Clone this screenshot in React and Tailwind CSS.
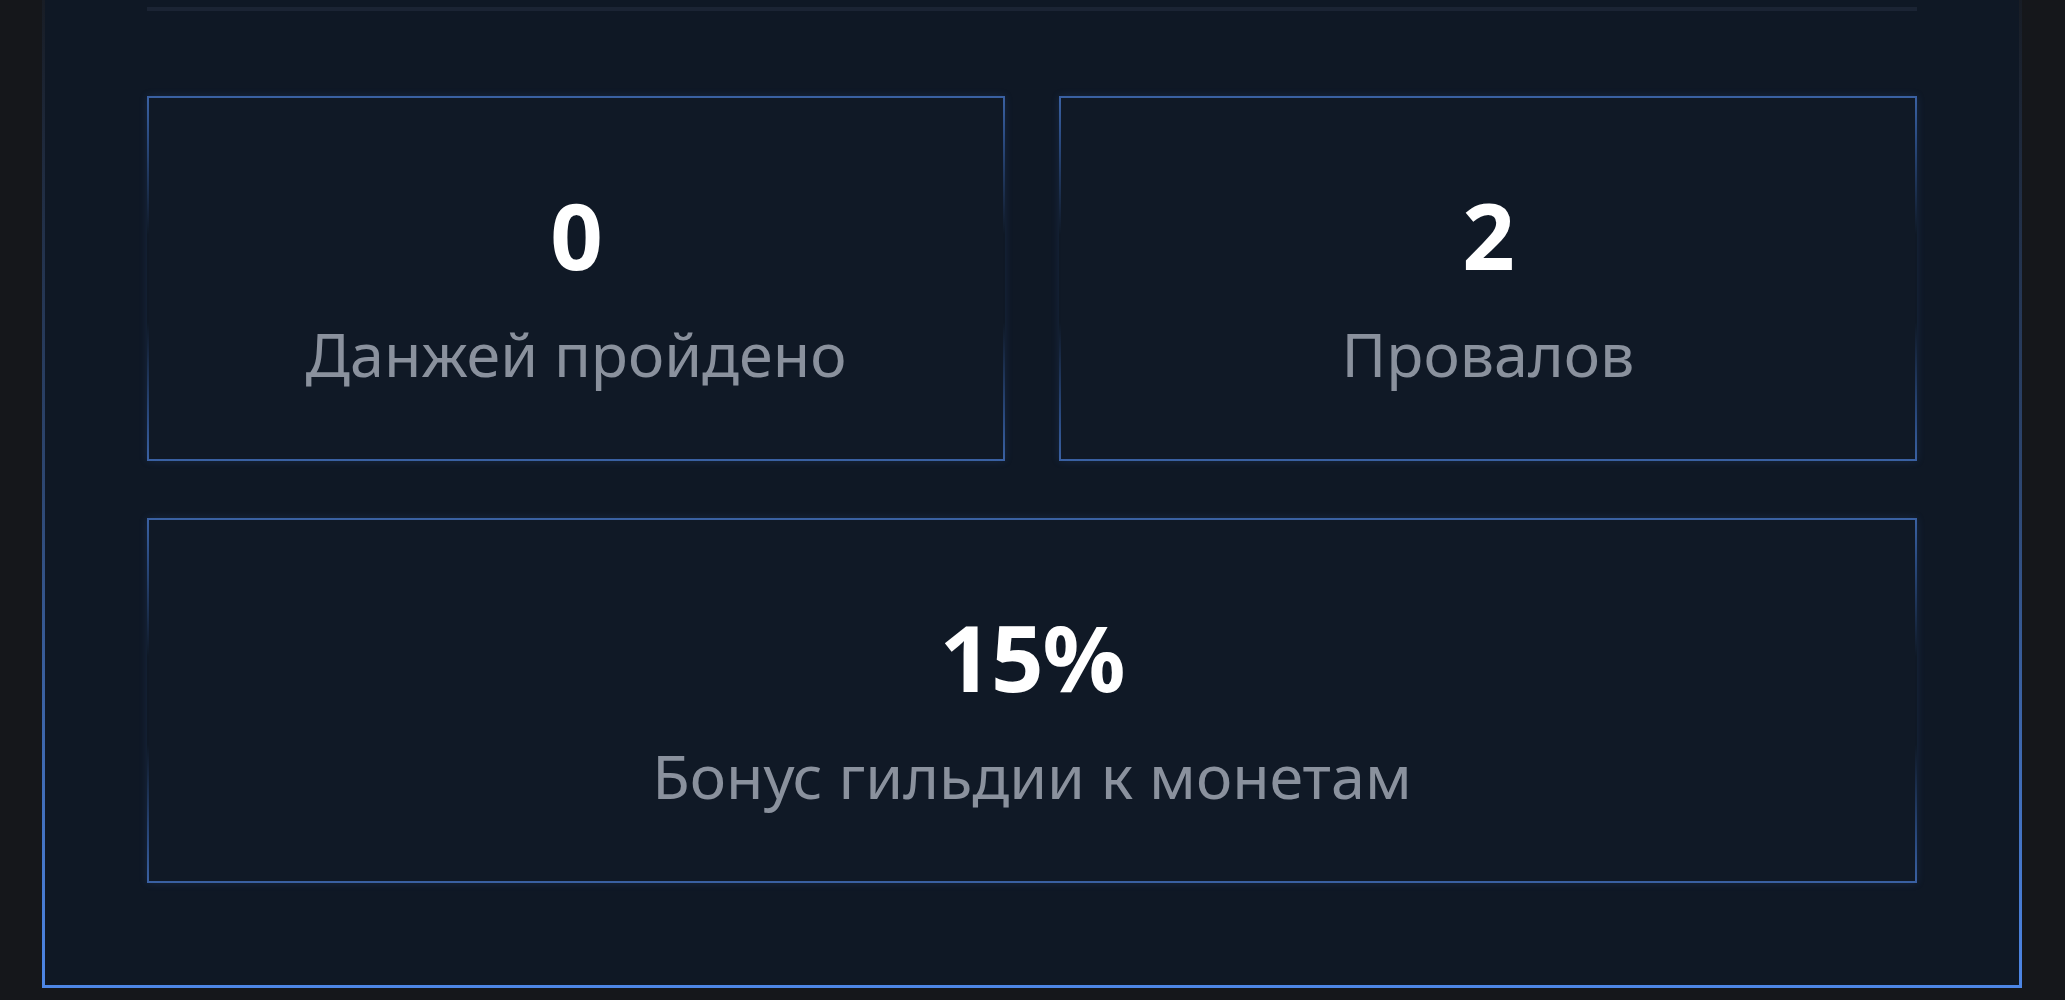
export default function App() {
  const Card = ({ value, label, extra = "" }) => (
    <div
      className={`flex h-[365px] flex-col items-center border-2 border-transparent pt-[91px] shadow-[0_0_8px_rgba(59,110,200,0.18)] [background:linear-gradient(#101926,#101926)_padding-box,linear-gradient(to_bottom,#3a61a3,#2a4a80_12%,transparent_38%,transparent_62%,#2a4a80_88%,#3a61a3)_border-box] ${extra}`}
    >
      <div className="text-[92px] font-bold leading-none text-white tracking-[-1px]">{value}</div>
      <div className="mt-[42px] text-[61px] leading-none text-[#8a919d]">{label}</div>
    </div>
  );
  return (
    <div
      className="flex h-[1000px] w-full bg-[#15171b] pl-[42px] pr-[43px] pb-[12px]"
      style={{ fontFamily: '"Noto Sans", "Open Sans", sans-serif' }}
    >
      <div className="flex w-full flex-col border-x-[3px] border-b-[3px] border-transparent px-[102px] pt-[7px] [background:linear-gradient(#0f1825,#0f1825)_padding-box,linear-gradient(to_bottom,rgba(75,130,222,0.05),rgba(75,130,222,0.45)_50%,#4d86e6)_border-box]">
        <div className="h-[4px] w-full bg-[#1b2434]" />
        <div className="mt-[85px] grid grid-cols-2 gap-x-[54px]">
          <Card value="0" label="Данжей пройдено" />
          <Card value="2" label="Провалов" />
        </div>
        <div className="mt-[57px]">
          <Card value="15%" label="Бонус гильдии к монетам" extra="h-[364px]" />
        </div>
      </div>
    </div>
  );
}
